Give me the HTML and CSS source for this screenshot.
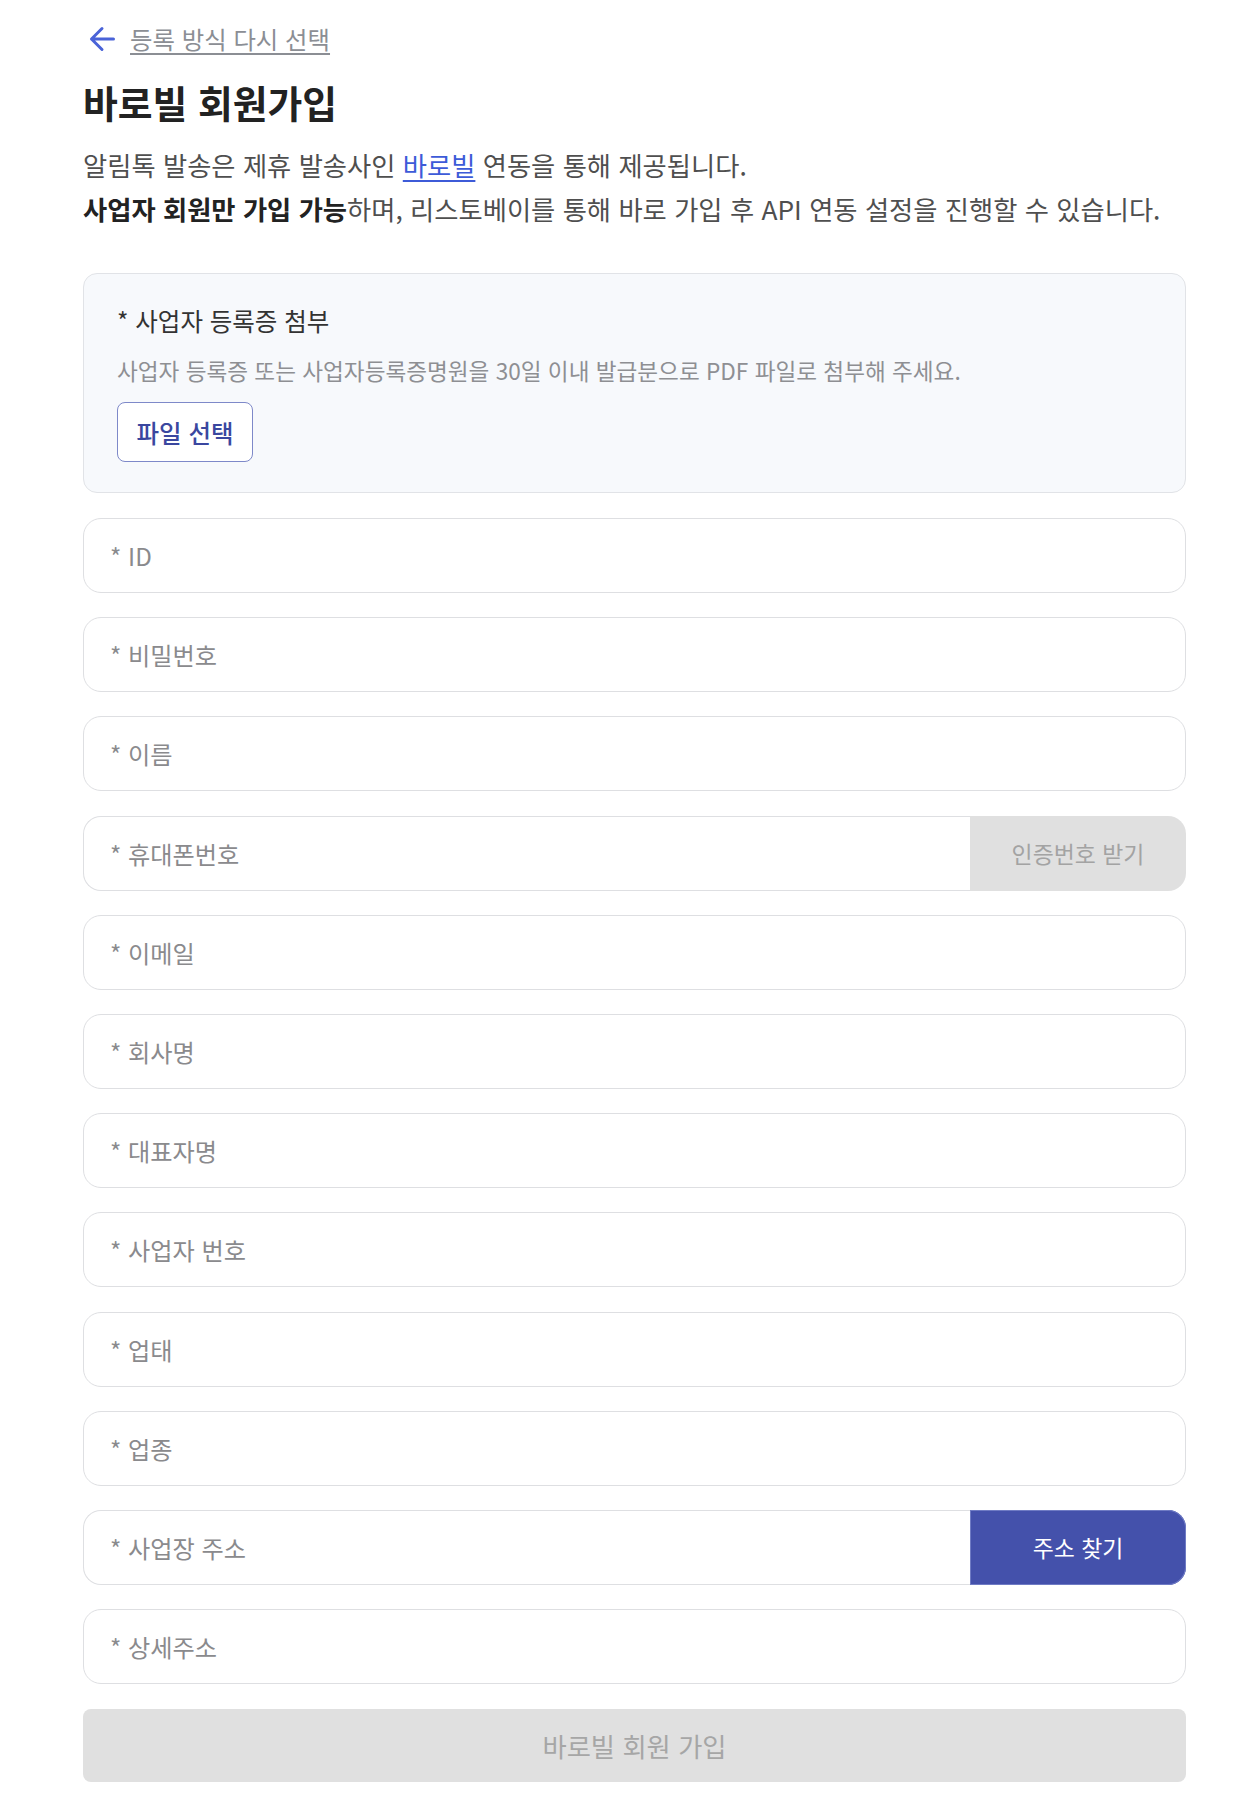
FILE: index.html
```html
<!DOCTYPE html>
<html lang="ko">
<head>
<meta charset="utf-8">
<title>바로빌 회원가입</title>
<link rel="stylesheet" href="styles.css">
</head>
<body>
<main class="page">
  <a class="back" href="#">
    <svg class="back-icon" viewBox="0 0 26 26" width="26" height="26" aria-hidden="true">
      <path d="M24.5 13H2.5M13 2.5L2.5 13L13 23.5" fill="none" stroke="#4a63d8" stroke-width="3" stroke-linecap="round" stroke-linejoin="round"/>
    </svg>
    <span class="back-text">등록 방식 다시 선택</span>
  </a>

  <h1 class="title">바로빌 회원가입</h1>

  <p class="desc">
    알림톡 발송은 제휴 발송사인 <a class="desc-link" href="#">바로빌</a> 연동을 통해 제공됩니다.<br>
    <strong>사업자 회원만 가입 가능</strong>하며, 리스토베이를 통해 바로 가입 후 API 연동 설정을 진행할 수 있습니다.
  </p>

  <form class="form">
    <section class="attach">
      <div class="attach-title">* 사업자 등록증 첨부</div>
      <div class="attach-sub">사업자 등록증 또는 사업자등록증명원을 30일 이내 발급분으로 PDF 파일로 첨부해 주세요.</div>
      <button type="button" class="file-btn">파일 선택</button>
    </section>

    <input class="field" type="text" placeholder="* ID">
    <input class="field" type="password" placeholder="* 비밀번호">
    <input class="field" type="text" placeholder="* 이름">
    <div class="combo">
      <input class="combo-input" type="text" placeholder="* 휴대폰번호">
      <button type="button" class="combo-btn combo-btn-gray">인증번호 받기</button>
    </div>
    <input class="field" type="text" placeholder="* 이메일">
    <input class="field" type="text" placeholder="* 회사명">
    <input class="field" type="text" placeholder="* 대표자명">
    <input class="field" type="text" placeholder="* 사업자 번호">
    <input class="field" type="text" placeholder="* 업태">
    <input class="field" type="text" placeholder="* 업종">
    <div class="combo">
      <input class="combo-input" type="text" placeholder="* 사업장 주소">
      <button type="button" class="combo-btn combo-btn-blue">주소 찾기</button>
    </div>
    <input class="field" type="text" placeholder="* 상세주소">

    <button type="button" class="submit">바로빌 회원 가입</button>
  </form>
</main>
</body>
</html>
```

FILE: styles.css
```css
* {
  box-sizing: border-box;
}

html, body {
  margin: 0;
  padding: 0;
  background: #ffffff;
}

body {
  font-family: "Noto Sans CJK KR", "Noto Sans", "Liberation Sans", sans-serif;
  color: #222222;
}

.page {
  width: 1103px;
  margin-left: 83px;
  padding-top: 22px;
  padding-bottom: 38px;
}

.back {
  display: flex;
  align-items: center;
  height: 34px;
  text-decoration: none;
}

.back-icon {
  display: block;
  margin-left: 6px;
  flex: none;
}

.back-text {
  margin-left: 15px;
  font-size: 24.4px;
  line-height: 34px;
  color: #8b8e94;
  text-decoration: underline;
  text-decoration-thickness: 1.5px;
  text-underline-offset: 4px;
}

.title {
  margin: 23px 0 0;
  font-size: 37.8px;
  line-height: 46px;
  font-weight: 700;
  color: #222222;
}

.desc {
  margin: 18px 0 0;
  font-size: 26.3px;
  line-height: 44px;
  color: #4f4f4f;
}

.desc strong {
  font-weight: 700;
  color: #222222;
}

.desc-link {
  color: #3d5bd8;
  text-decoration: underline;
  text-decoration-thickness: 1.5px;
  text-underline-offset: 4px;
}

.form {
  margin-top: 42px;
  display: flex;
  flex-direction: column;
}

.attach {
  height: 220px;
  border: 1.5px solid #e1e3e7;
  border-radius: 14px;
  background: #f7f9fc;
  padding: 30px 32px 0 33px;
  display: flex;
  flex-direction: column;
  align-items: flex-start;
}

.attach-title {
  font-size: 24.5px;
  line-height: 34px;
  color: #333333;
}

.attach-sub {
  margin-top: 18px;
  font-size: 22.6px;
  line-height: 30px;
  color: #8e8f93;
}

.file-btn {
  margin-top: 16px;
  width: 136px;
  height: 60px;
  border: 1.5px solid #7e89c9;
  border-radius: 8px;
  background: #ffffff;
  font-family: inherit;
  font-size: 24.5px;
  font-weight: 500;
  color: #3a479f;
  padding: 0;
  cursor: pointer;
}

.field {
  margin-top: 24.2px;
  width: 100%;
  height: 75px;
  border: 1.5px solid #dedfe2;
  border-radius: 18px;
  background: #ffffff;
  padding: 0 0 0 26px;
  font-family: inherit;
  font-size: 24.2px;
  color: #222222;
  outline: none;
}

.attach + .field {
  margin-top: 25px;
}

.field::placeholder,
.combo-input::placeholder {
  color: #8a8a8d;
  opacity: 1;
}

.combo {
  margin-top: 24.2px;
  display: flex;
  height: 75px;
}

.combo-input {
  flex: 1;
  min-width: 0;
  height: 100%;
  border: 1.5px solid #dedfe2;
  border-right: none;
  border-radius: 18px 0 0 18px;
  background: #ffffff;
  padding: 0 0 0 26px;
  font-family: inherit;
  font-size: 24.2px;
  outline: none;
}

.combo-btn {
  flex: none;
  width: 216px;
  height: 100%;
  border: none;
  border-radius: 0 18px 18px 0;
  font-family: inherit;
  font-size: 22.9px;
  padding: 0;
  cursor: pointer;
}

.combo-btn-gray {
  background: #e0e0e0;
  color: #a3a3a3;
}

.combo-btn-blue {
  background: #4451ab;
  color: #ffffff;
  box-shadow: inset 0 0 0 1px #6f7bc4;
}

.submit {
  margin-top: 25px;
  width: 100%;
  height: 73px;
  border: none;
  border-radius: 8px;
  background: #e0e0e0;
  font-family: inherit;
  font-size: 26.3px;
  color: #a6a6a6;
  padding: 0;
  cursor: pointer;
}
```
